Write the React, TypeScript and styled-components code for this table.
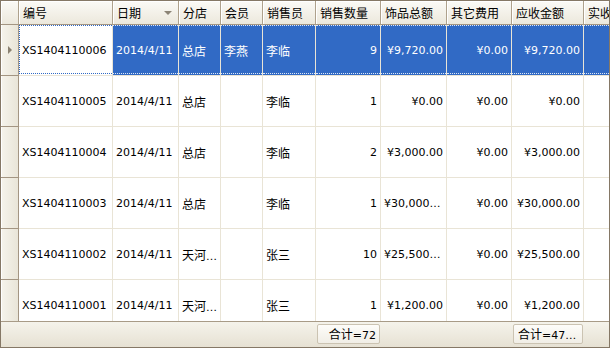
import React from 'react';
import styled, { createGlobalStyle, css } from 'styled-components';

const COLS = '18px 94px 66px 42px 42px 53px 65px 66px 65px 72px 72px';

const Global = createGlobalStyle`
  html, body { margin: 0; padding: 0; background: #fff; }
  body { font-family: "DejaVu Sans", "Noto Sans CJK SC", sans-serif; }
`;

const Frame = styled.div`
  box-sizing: border-box;
  width: 610px;
  height: 348px;
  border: 1px solid #857866;
  display: flex;
  flex-direction: column;
  overflow: hidden;
  background: #fff;
`;

const HeaderRow = styled.div`
  display: grid;
  grid-template-columns: ${COLS};
  height: 24px;
  flex: none;
`;

const HeadCell = styled.div`
  box-sizing: border-box;
  border-right: 1px solid #aea18c;
  border-bottom: 1px solid #a39582;
  background: linear-gradient(#fbfaf6, #ece8dc);
  box-shadow: inset 1px 1px 0 #fff;
  font: 12px "Noto Sans CJK SC", sans-serif;
  color: #000;
  padding-left: 4px;
  display: flex;
  align-items: center;
  white-space: nowrap;
  overflow: hidden;
`;

const SortArrow = styled.span`
  margin-left: auto;
  margin-right: 6px;
  width: 0;
  height: 0;
  border-left: 4px solid transparent;
  border-right: 4px solid transparent;
  border-top: 4px solid #8c8476;
`;

const Body = styled.div`
  flex: 1;
  overflow: hidden;
`;

const Row = styled.div`
  display: grid;
  grid-template-columns: ${COLS};
  height: 51px;
`;

const RowHead = styled.div`
  box-sizing: border-box;
  border-right: 1px solid #a39582;
  border-bottom: 1px solid #a39582;
  background: linear-gradient(90deg, #f6f4ec, #e9e5d8);
  box-shadow: inset 1px 0 0 #fff;
  display: flex;
  align-items: center;
  justify-content: center;
  padding-left: 1px;
`;

const Indicator = styled.span`
  width: 0;
  height: 0;
  border-top: 4px solid transparent;
  border-bottom: 4px solid transparent;
  border-left: 4px solid #8a8171;
`;

type CellProps = { $right?: boolean; $sel?: boolean; $focus?: boolean };

const Cell = styled.div<CellProps>`
  box-sizing: border-box;
  position: relative;
  border-right: 1px solid #e9e4d6;
  border-bottom: 1px solid #e9e4d6;
  padding: ${(p) => (p.$right ? '0 3px' : '0 0 0 3px')};
  font-size: 11px;
  line-height: 52px;
  color: #000;
  text-align: ${(p) => (p.$right ? 'right' : 'left')};
  white-space: nowrap;
  overflow: hidden;
  text-overflow: ellipsis;
  ${(p) =>
    p.$sel &&
    css`
      background: #316ac5;
      color: #fff;
      &::after {
        content: '';
        position: absolute;
        left: 0;
        right: 0;
        top: 0;
        bottom: 1px;
        border-top: 1px dotted #dfe8f7;
        border-bottom: 1px dotted #dfe8f7;
      }
    `}
  ${(p) =>
    p.$focus &&
    css`
      background: #fff;
      color: #000;
      &::after {
        content: '';
        position: absolute;
        left: 0;
        right: 0;
        top: 0;
        bottom: 1px;
        border-top: 1px dotted #316ac5;
        border-bottom: 1px dotted #316ac5;
        border-left: 1px dotted #316ac5;
      }
    `}
`;

const Zh = styled.span`
  font-family: "Noto Sans CJK SC", sans-serif;
  font-size: 12px;
`;

const Footer = styled.div`
  flex: none;
  box-sizing: border-box;
  height: 26px;
  border-top: 1px solid #a89b87;
  background: linear-gradient(#f5f3eb, #e6e1d3);
  display: grid;
  grid-template-columns: ${COLS};
  align-items: center;
`;

const SumButton = styled.div<{ $col: number }>`
  grid-column: ${(p) => p.$col};
  box-sizing: border-box;
  height: 20px;
  margin: 0 1px 1px 1px;
  border: 1px solid #cbc3b2;
  border-radius: 2px;
  background: linear-gradient(#fdfcf9, #f1eee6);
  padding: 0 3px 0 4px;
  font-size: 11px;
  line-height: 18px;
  color: #000;
  text-align: right;
  white-space: nowrap;
  overflow: hidden;
  text-overflow: ellipsis;
`;

type Rec = {
  id: string;
  date: string;
  shop: string;
  member: string;
  seller: string;
  qty: string;
  goods: string;
  other: string;
  due: string;
};

const rows: Rec[] = [
  { id: 'XS1404110006', date: '2014/4/11', shop: '总店', member: '李燕', seller: '李临', qty: '9', goods: '¥9,720.00', other: '¥0.00', due: '¥9,720.00' },
  { id: 'XS1404110005', date: '2014/4/11', shop: '总店', member: '', seller: '李临', qty: '1', goods: '¥0.00', other: '¥0.00', due: '¥0.00' },
  { id: 'XS1404110004', date: '2014/4/11', shop: '总店', member: '', seller: '李临', qty: '2', goods: '¥3,000.00', other: '¥0.00', due: '¥3,000.00' },
  { id: 'XS1404110003', date: '2014/4/11', shop: '总店', member: '', seller: '李临', qty: '1', goods: '¥30,000.00', other: '¥0.00', due: '¥30,000.00' },
  { id: 'XS1404110002', date: '2014/4/11', shop: '天河分店', member: '', seller: '张三', qty: '10', goods: '¥25,500.00', other: '¥0.00', due: '¥25,500.00' },
  { id: 'XS1404110001', date: '2014/4/11', shop: '天河分店', member: '', seller: '张三', qty: '1', goods: '¥1,200.00', other: '¥0.00', due: '¥1,200.00' },
];

const headers = ['编号', '日期', '分店', '会员', '销售员', '销售数量', '饰品总额', '其它费用', '应收金额', '实收金额'];

export default function App() {
  return (
    <>
      <Global />
      <Frame>
        <HeaderRow>
          <HeadCell />
          {headers.map((h) => (
            <HeadCell key={h}>
              {h}
              {h === '日期' && <SortArrow />}
            </HeadCell>
          ))}
        </HeaderRow>
        <Body>
          {rows.map((r, i) => {
            const sel = i === 0;
            return (
              <Row key={r.id}>
                <RowHead>{sel && <Indicator />}</RowHead>
                <Cell $focus={sel}>{r.id}</Cell>
                <Cell $sel={sel}>{r.date}</Cell>
                <Cell $sel={sel}>
                  <Zh>{r.shop}</Zh>
                </Cell>
                <Cell $sel={sel}>
                  <Zh>{r.member}</Zh>
                </Cell>
                <Cell $sel={sel}>
                  <Zh>{r.seller}</Zh>
                </Cell>
                <Cell $sel={sel} $right>
                  {r.qty}
                </Cell>
                <Cell $sel={sel} $right>
                  {r.goods}
                </Cell>
                <Cell $sel={sel} $right>
                  {r.other}
                </Cell>
                <Cell $sel={sel} $right>
                  {r.due}
                </Cell>
                <Cell $sel={sel} $right />
              </Row>
            );
          })}
        </Body>
        <Footer>
          <SumButton $col={7}>
            <Zh>合计</Zh>=72
          </SumButton>
          <SumButton $col={10}>
            <Zh>合计</Zh>=47,920.00
          </SumButton>
        </Footer>
      </Frame>
    </>
  );
}
